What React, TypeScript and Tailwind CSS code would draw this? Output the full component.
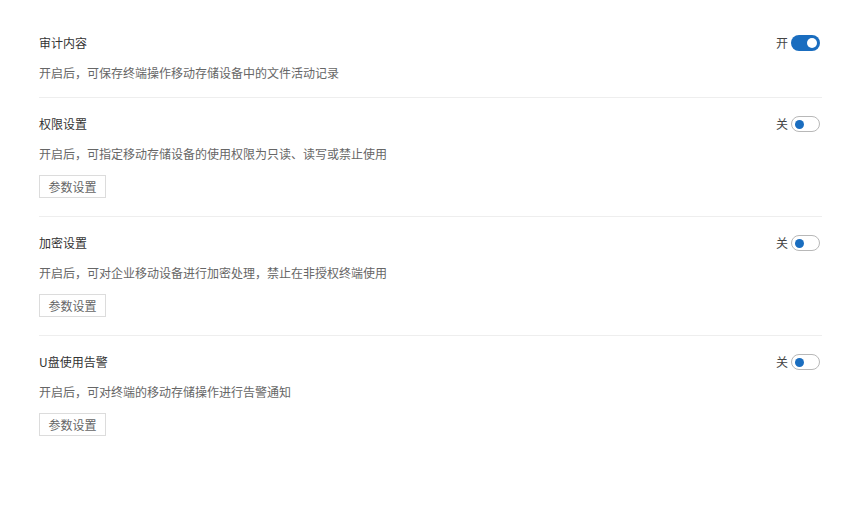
const SECTIONS = [
  { title: '审计内容', desc: '开启后，可保存终端操作移动存储设备中的文件活动记录', on: true, params: false },
  { title: '权限设置', desc: '开启后，可指定移动存储设备的使用权限为只读、读写或禁止使用', on: false, params: true },
  { title: '加密设置', desc: '开启后，可对企业移动设备进行加密处理，禁止在非授权终端使用', on: false, params: true },
  { title: 'U盘使用告警', desc: '开启后，可对终端的移动存储操作进行告警通知', on: false, params: true },
];

function Toggle({ on }: { on: boolean }) {
  return (
    <div className="flex items-center gap-[3px] mr-[2px]">
      <span className="text-[12px] text-[#444]">{on ? '开' : '关'}</span>
      {on ? (
        <div className="w-[29px] h-[16px] rounded-full bg-[#1a6dbf] flex items-center justify-end pr-[3px]">
          <div className="w-[10px] h-[10px] rounded-full bg-white" />
        </div>
      ) : (
        <div className="w-[29px] h-[16px] rounded-full bg-white border border-[#b8b8b8] flex items-center pl-[3px]">
          <div className="w-[9px] h-[9px] rounded-full bg-[#1a6dbf]" />
        </div>
      )}
    </div>
  );
}

export default function App() {
  return (
    <div
      className="w-[862px] h-[518px] bg-white pl-[39px] pr-[40px]"
      style={{ fontFamily: '"Noto Sans CJK SC", "Noto Sans", sans-serif' }}
    >
      {SECTIONS.map((s, i) => (
        <div
          key={s.title}
          className={
            (i === 0 ? 'pt-[33px] pb-[14px]' : 'pt-[16px] pb-[18px]') +
            (i < SECTIONS.length - 1 ? ' border-b border-[#eeeeee]' : '')
          }
        >
          <div className="h-[20px] flex items-center justify-between">
            <span className="text-[12px] text-[#333]">{s.title}</span>
            <Toggle on={s.on} />
          </div>
          <p className="mt-[10px] text-[12px] leading-[20px] text-[#666]">{s.desc}</p>
          {s.params && (
            <button className="mt-[11px] h-[23px] w-[67px] border border-[#dcdcdc] bg-white text-[12px] text-[#666] flex items-center justify-center">
              参数设置
            </button>
          )}
        </div>
      ))}
    </div>
  );
}
